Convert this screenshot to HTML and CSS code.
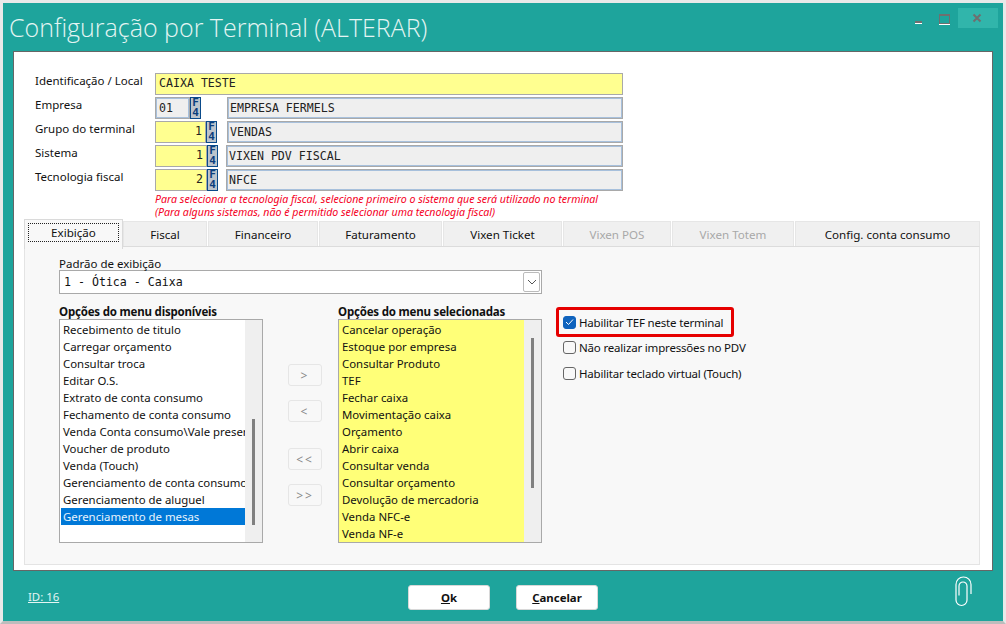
FILE: index.html
```html
<!DOCTYPE html>
<html lang="pt-BR">
<head>
    <meta charset="UTF-8">
    <title>Configuração por Terminal</title>
    <link rel="stylesheet" href="styles.css">
</head>
<body>
    <div class="window">
        <div class="titlebar">
            <h1>Configuração por Terminal (ALTERAR)</h1>
            <div class="win-btn"><span class="win-min"></span></div>
            <div class="win-btn"><span class="win-max"></span></div>
            <div class="win-close">
                <svg width="10" height="10" viewBox="0 0 10 10"><path d="M1.500 1.500l7 7M8.500 1.500l-7 7" stroke="#6f6f6f" stroke-width="2" fill="none"/></svg>
            </div>
        </div>

        <div class="panel">
            <div class="form">
                <div class="row">
                    <label class="lbl">Identificação / Local</label>
                    <div class="field req w-full">CAIXA TESTE</div>
                </div>
                <div class="row">
                    <label class="lbl">Empresa</label>
                    <div class="field ro w-code">01</div>
                    <div class="f4">F4</div>
                    <div class="field ro name">EMPRESA FERMELS</div>
                </div>
                <div class="row">
                    <label class="lbl">Grupo do terminal</label>
                    <div class="field req num w-num">1</div>
                    <div class="f4">F4</div>
                    <div class="field ro name">VENDAS</div>
                </div>
                <div class="row">
                    <label class="lbl">Sistema</label>
                    <div class="field req num w-num2">1</div>
                    <div class="f4">F4</div>
                    <div class="field ro name name-wide">VIXEN PDV FISCAL</div>
                </div>
                <div class="row">
                    <label class="lbl">Tecnologia fiscal</label>
                    <div class="field req num w-num2">2</div>
                    <div class="f4">F4</div>
                    <div class="field ro name name-wide">NFCE</div>
                </div>
                <div class="hint">
                    Para selecionar a tecnologia fiscal, selecione primeiro o sistema que será utilizado no terminal<br>
                    (Para alguns sistemas, não é permitido selecionar uma tecnologia fiscal)
                </div>
            </div>

            <div class="tabs">
                <div class="tab active"><span>Exibição</span></div>
                <div class="tab">Fiscal</div>
                <div class="tab">Financeiro</div>
                <div class="tab">Faturamento</div>
                <div class="tab">Vixen Ticket</div>
                <div class="tab off">Vixen POS</div>
                <div class="tab off">Vixen Totem</div>
                <div class="tab">Config. conta consumo</div>
            </div>

            <div class="tab-body">
                <div class="cap">Padrão de exibição</div>
                <div class="select">
                    <span>1 - Ótica - Caixa</span>
                    <div class="select-btn">
                        <svg width="10" height="6" viewBox="0 0 10 6"><path d="M1 1l4 4 4-4" stroke="#555" fill="none"/></svg>
                    </div>
                </div>

                <div class="columns">
                    <div>
                        <div class="list-title">Opções do menu disponíveis</div>
                        <div class="list">
                            <ul>
                                <li>Recebimento de titulo</li>
                                <li>Carregar orçamento</li>
                                <li>Consultar troca</li>
                                <li>Editar O.S.</li>
                                <li>Extrato de conta consumo</li>
                                <li>Fechamento de conta consumo</li>
                                <li>Venda Conta consumo\Vale presente</li>
                                <li>Voucher de produto</li>
                                <li>Venda (Touch)</li>
                                <li>Gerenciamento de conta consumo</li>
                                <li>Gerenciamento de aluguel</li>
                                <li class="sel">Gerenciamento de mesas</li>
                            </ul>
                            <div class="scroll"><div class="thumb thumb-left"></div></div>
                        </div>
                    </div>

                    <div class="moves">
                        <button class="move">&gt;</button>
                        <button class="move">&lt;</button>
                        <button class="move move-gap">&lt;&lt;</button>
                        <button class="move">&gt;&gt;</button>
                    </div>

                    <div>
                        <div class="list-title">Opções do menu selecionadas</div>
                        <div class="list">
                            <ul class="yellow">
                                <li>Cancelar operação</li>
                                <li>Estoque por empresa</li>
                                <li>Consultar Produto</li>
                                <li>TEF</li>
                                <li>Fechar caixa</li>
                                <li>Movimentação caixa</li>
                                <li>Orçamento</li>
                                <li>Abrir caixa</li>
                                <li>Consultar venda</li>
                                <li>Consultar orçamento</li>
                                <li>Devolução de mercadoria</li>
                                <li>Venda NFC-e</li>
                                <li>Venda NF-e</li>
                            </ul>
                            <div class="scroll"><div class="thumb thumb-right"></div></div>
                        </div>
                    </div>

                    <div class="checks">
                        <div class="check-mark">
                            <div class="check">
                                <span class="box on">
                                    <svg width="9" height="8" viewBox="0 0 9 8"><path d="M1 4l2.500 2.500L8 1.500" stroke="#fff" fill="none"/></svg>
                                </span>
                                Habilitar TEF neste terminal
                            </div>
                        </div>
                        <div class="check check-2"><span class="box"></span>Não realizar impressões no PDV</div>
                        <div class="check check-3"><span class="box"></span>Habilitar teclado virtual (Touch)</div>
                    </div>
                </div>
            </div>
        </div>

        <div class="footer">
            <a class="id-link">ID: 16</a>
            <button class="btn btn-ok"><u>O</u>k</button>
            <button class="btn"><u>C</u>ancelar</button>
            <svg class="clip" width="17" height="31" viewBox="0 0 17 31"><path d="M16 18V8.500a7.500 7.500 0 0 0-15 0V24a5.500 5.500 0 0 0 11 0V10a4 4 0 0 0-8 0v9.500" stroke="#fff" stroke-width="1.200" fill="none"/></svg>
        </div>
    </div>
</body>
</html>
```

FILE: styles.css
```css
* {
    box-sizing: border-box;
}
body {
    margin: 0;
    font-family: "Noto Sans", Arial, sans-serif;
    font-size: 11.5px;
    color: #111;
}
.window {
    width: 1006px;
    height: 624px;
    display: flex;
    flex-direction: column;
    background: #1ea49c;
    border: 3px solid #e9e9e9;
    border-bottom-color: #bdbdbd;
}
.titlebar {
    height: 48px;
    flex: none;
    display: flex;
    align-items: flex-start;
    padding: 5px 5px 0 6px;
}
.titlebar h1 {
    margin: 3px 0 0;
    flex: 1;
    font-family: "Open Sans", sans-serif;
    font-weight: 300;
    font-size: 25px;
    line-height: 33px;
    color: #e4f5f3;
}
.win-btn {
    width: 23px;
    height: 20px;
    position: relative;
}
.win-min {
    position: absolute;
    left: 3px;
    top: 13px;
    width: 7px;
    height: 3px;
    background: #6f6f6f;
    border-bottom: 1px solid #fff;
}
.win-max {
    position: absolute;
    left: 4px;
    top: 6px;
    width: 11px;
    height: 10px;
    border: 1px solid #6f6f6f;
    border-top-width: 2px;
    box-shadow: 0 1px 0 #fff;
}
.win-close {
    width: 40px;
    height: 20px;
    background: #31b5ab;
    display: flex;
    align-items: center;
    justify-content: center;
    padding-right: 3px;
}

.panel {
    flex: none;
    height: 520px;
    margin: 0 10px;
    background: #fff;
    border: 1px solid #666;
    display: flex;
    flex-direction: column;
    padding: 21px 12px 5px 10px;
}
.form {
    padding-left: 11px;
    height: 148px;
    flex: none;
}
.row {
    display: flex;
    width: 588px;
    height: 22px;
    margin-bottom: 2px;
}
.lbl {
    width: 120px;
    flex: none;
    line-height: 16px;
}
.field {
    height: 22px;
    border: 1px solid #a9a9a9;
    font-family: "DejaVu Sans Mono", monospace;
    font-size: 11.6px;
    line-height: 19px;
    padding: 0 3px;
    color: #222;
}
.req {
    background: #ffff90;
}
.ro {
    background: #efefef;
    border: 2px solid #a7c0dc;
    outline: 1px solid #a9a9a9;
    outline-offset: -1px;
    line-height: 18px;
    padding: 0 1px;
}
.num {
    text-align: right;
}
.w-full {
    width: 468px;
}
.w-code {
    width: 35px;
    padding-left: 2px;
}
.w-num {
    width: 51px;
}
.w-num2 {
    width: 52px;
}
.name {
    width: 396px;
    margin-left: auto;
}
.name-wide {
    width: 397px;
}
.f4 {
    width: 11px;
    height: 22px;
    flex: none;
    background: #bcc4cc;
    border: 1px solid #0a4a8a;
    color: #0a3d7d;
    font-family: "DejaVu Sans Mono", monospace;
    font-weight: bold;
    font-size: 11px;
    line-height: 9px;
    writing-mode: vertical-rl;
    text-orientation: upright;
    letter-spacing: -3px;
    text-indent: -2px;
}
.hint {
    padding-left: 120px;
    color: #f5001e;
    font-style: italic;
    font-size: 10.6px;
    line-height: 13px;
    white-space: nowrap;
}

.tabs {
    flex: none;
    height: 25px;
    display: grid;
    grid-template-columns: 99px 85px 111px 124px 120px 109px 123px 185px;
    font-size: 11.6px;
}
.tab {
    margin-right: 1px;
    background: #f0f0f0;
    border: 1px solid #e6e6e6;
    border-bottom-color: #dcdcdc;
    text-align: center;
    line-height: 25px;
    color: #111;
}
.tab:last-child {
    margin-right: 0;
}
.tab.active {
    margin: -2px 0 -1px;
    background: #f8f8f8;
    border-color: #dadada;
    border-bottom: none;
    padding: 3px 3px 0;
    position: relative;
}
.tab.active span {
    display: block;
    height: 19px;
    line-height: 17px;
    border: 1px dotted #222;
}
.tab.off {
    color: #a8a8a8;
}
.tab-body {
    flex: 1;
    background: #f8f8f8;
    border: 1px solid #e4e4e4;
    border-top-color: #dcdcdc;
    padding: 10px 0 0 34px;
}
.cap {
    height: 13px;
    line-height: 13px;
}
.select {
    width: 483px;
    height: 24px;
    background: #fff;
    border: 1px solid #a9a9a9;
    display: flex;
    justify-content: space-between;
    align-items: center;
    padding-left: 4px;
    font-family: "DejaVu Sans Mono", monospace;
    font-size: 11.6px;
}
.select-btn {
    width: 17px;
    height: 20px;
    margin-right: 1px;
    border: 1px solid #bbb;
    border-radius: 2px;
    display: flex;
    align-items: center;
    justify-content: center;
}
.columns {
    display: flex;
    margin-top: 10px;
}
.list-title {
    font-weight: bold;
    height: 15px;
    line-height: 16px;
    letter-spacing: -0.2px;
}
.list {
    width: 204px;
    height: 224px;
    background: #fff;
    border: 1px solid #a9a9a9;
    display: flex;
    font-size: 11.4px;
}
.list ul {
    list-style: none;
    margin: 0;
    padding: 1px 0 0 1px;
    width: 185px;
    overflow: hidden;
}
.list li {
    height: 17px;
    line-height: 17px;
    padding-left: 2px;
    white-space: nowrap;
    overflow: hidden;
}
.list ul.yellow {
    background: #ffff78;
    padding-left: 0;
}
.list ul.yellow li {
    padding-left: 3px;
}
.list li.sel {
    background: #0078d7;
    color: #e8f3fc;
}
.scroll {
    flex: 1;
    background: #efefef;
    position: relative;
}
.thumb {
    position: absolute;
    left: 7px;
    width: 3px;
    background: #808080;
}
.thumb-left {
    top: 99px;
    height: 106px;
}
.thumb-right {
    top: 18px;
    height: 150px;
}
.moves {
    width: 75px;
    padding: 60px 0 0 25px;
    flex: none;
}
.move {
    display: block;
    width: 34px;
    height: 22px;
    margin-bottom: 14px;
    padding: 0;
    background: #f8f8f8;
    border: 1px solid #e6e6e6;
    border-radius: 3px;
    color: #888;
    font-family: "Noto Sans", sans-serif;
    font-size: 12px;
    letter-spacing: 2px;
}
.move-gap {
    margin-top: 26px;
}
.checks {
    margin: 3px 0 0 14px;
    letter-spacing: -0.18px;
}
.check-mark {
    width: 178px;
    height: 30px;
    border: 3px solid #e60000;
    border-radius: 3px;
    padding: 4px 0 0 4px;
}
.check {
    display: flex;
    align-items: center;
    gap: 3px;
    height: 16px;
    white-space: nowrap;
}
.check-2 {
    margin: 2px 0 0 7px;
}
.check-3 {
    margin: 10px 0 0 7px;
}
.box {
    width: 13px;
    height: 13px;
    flex: none;
    border: 1px solid #666;
    border-radius: 3px;
    background: #f8f8f8;
    display: flex;
    align-items: center;
    justify-content: center;
}
.box.on {
    background: #0f63bd;
    border-color: #0f63bd;
}

.footer {
    flex: 1;
    display: flex;
    align-items: flex-start;
    padding: 14px 0 0 25px;
}
.id-link {
    width: 380px;
    margin-top: 4px;
    color: #e4f5f3;
    text-decoration: underline;
    line-height: 16px;
    font-size: 11.4px;
}
.btn {
    width: 82px;
    height: 25px;
    margin-right: 26px;
    padding: 0;
    background: #fff;
    border: 1px solid #d8d8d8;
    border-radius: 3px;
    font-family: "Noto Sans", sans-serif;
    font-size: 11.4px;
    font-weight: bold;
    color: #111;
}
.clip {
    margin: -9px 0 0 331px;
}
```
